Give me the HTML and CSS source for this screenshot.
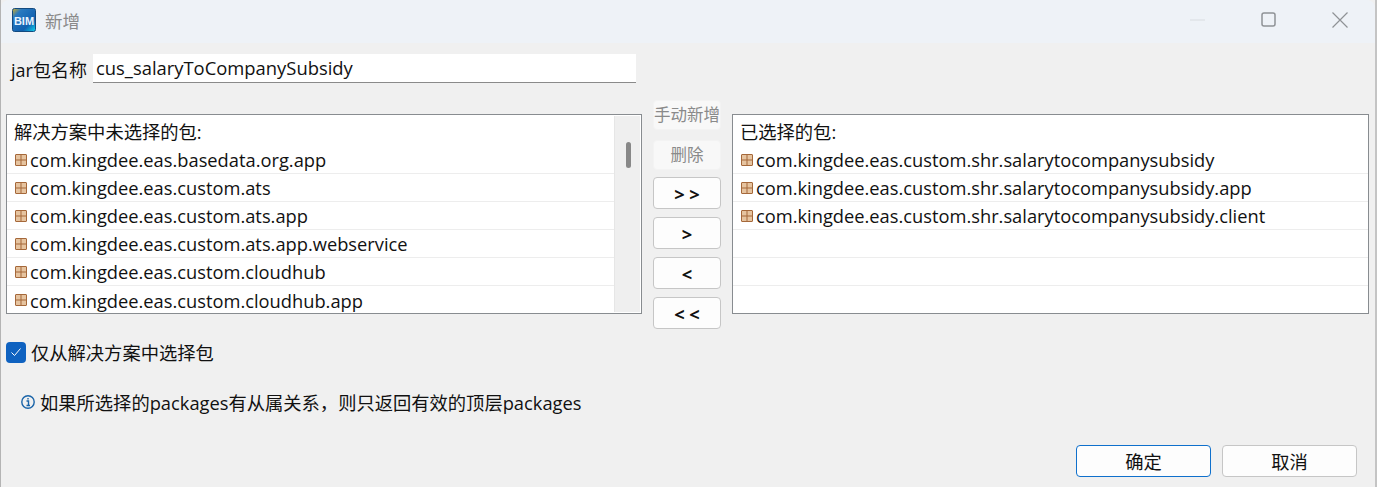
FILE: index.html
```html
<!DOCTYPE html>
<html lang="zh">
<head>
<meta charset="utf-8">
<title>新增</title>
<link rel="stylesheet" href="styles.css">
</head>
<body>
<div class="window">
  <header class="titlebar">
    <svg class="app-icon" width="24" height="24" viewBox="0 0 24 24">
      <defs><linearGradient id="g" x1="0" y1="0" x2="1" y2="1"><stop offset="0" stop-color="#d8b020"/><stop offset=".22" stop-color="#2a7ac0"/><stop offset=".7" stop-color="#1060b0"/><stop offset="1" stop-color="#10d8f0"/></linearGradient></defs>
      <rect x=".5" y=".5" width="23" height="23" rx="2" fill="url(#g)" stroke="#124a80"/>
      <text x="12" y="17" class="bim">BIM</text>
    </svg>
    <span class="title">新增</span>
    <div class="controls">
      <svg class="ctl" width="16" height="2" viewBox="0 0 16 2"><path d="M0 1h15" stroke="#d8dce0" stroke-width="1"/></svg>
      <svg class="ctl" width="16" height="16" viewBox="0 0 16 16"><rect x="1" y="1" width="13" height="13" rx="2" fill="none" stroke="#8f9296" stroke-width="1.500"/></svg>
      <svg class="ctl" width="16" height="16" viewBox="0 0 16 16"><path d="M.5.500l15 15M15.500.500l-15 15" stroke="#8f9296" stroke-width="1.200"/></svg>
    </div>
  </header>
  <main class="body">
    <div class="name-row">
      <label class="name-label">jar包名称</label>
      <div class="name-input">cus_salaryToCompanySubsidy</div>
    </div>
    <div class="transfer">
      <section class="list list-left">
        <div class="items">
          <div class="list-head">解决方案中未选择的包:</div>
          <div class="item"><svg class="pkg" viewBox="0 0 12 12"><use href="#pkg"/></svg>com.kingdee.eas.basedata.org.app</div>
          <div class="item"><svg class="pkg" viewBox="0 0 12 12"><use href="#pkg"/></svg>com.kingdee.eas.custom.ats</div>
          <div class="item"><svg class="pkg" viewBox="0 0 12 12"><use href="#pkg"/></svg>com.kingdee.eas.custom.ats.app</div>
          <div class="item"><svg class="pkg" viewBox="0 0 12 12"><use href="#pkg"/></svg>com.kingdee.eas.custom.ats.app.webservice</div>
          <div class="item"><svg class="pkg" viewBox="0 0 12 12"><use href="#pkg"/></svg>com.kingdee.eas.custom.cloudhub</div>
          <div class="item last"><svg class="pkg" viewBox="0 0 12 12"><use href="#pkg"/></svg>com.kingdee.eas.custom.cloudhub.app</div>
        </div>
        <div class="scrollbar"><div class="thumb"></div></div>
      </section>
      <div class="mid">
        <button class="btn btn-mid off">手动新增</button>
        <button class="btn btn-mid off">删除</button>
        <button class="btn btn-mid arrow">&gt; &gt;</button>
        <button class="btn btn-mid arrow">&gt;</button>
        <button class="btn btn-mid arrow">&lt;</button>
        <button class="btn btn-mid arrow">&lt; &lt;</button>
      </div>
      <section class="list list-right">
        <div class="items">
          <div class="list-head">已选择的包:</div>
          <div class="item"><svg class="pkg" viewBox="0 0 12 12"><use href="#pkg"/></svg>com.kingdee.eas.custom.shr.salarytocompanysubsidy</div>
          <div class="item"><svg class="pkg" viewBox="0 0 12 12"><use href="#pkg"/></svg>com.kingdee.eas.custom.shr.salarytocompanysubsidy.app</div>
          <div class="item"><svg class="pkg" viewBox="0 0 12 12"><use href="#pkg"/></svg>com.kingdee.eas.custom.shr.salarytocompanysubsidy.client</div>
          <div class="item"></div>
          <div class="item"></div>
          <div class="item last"></div>
        </div>
      </section>
    </div>
    <div class="check-row">
      <span class="checkbox"><svg width="12" height="10" viewBox="0 0 12 10"><path d="M1.500 5.500l3 3 6-7" fill="none" stroke="#fff" stroke-width="1"/></svg></span>
      <span>仅从解决方案中选择包</span>
    </div>
    <div class="info-row">
      <svg class="info" width="14" height="14" viewBox="0 0 14 14"><circle cx="7" cy="7" r="6.200" fill="none" stroke="#1a64a8" stroke-width="1.400"/><path d="M5.500 6h2v4M5.500 10.500h3.500M7 3v1.500" fill="none" stroke="#1a64a8" stroke-width="1.400"/></svg>
      <span>如果所选择的packages有从属关系，则只返回有效的顶层packages</span>
    </div>
    <footer class="footer">
      <button class="btn btn-foot primary">确定</button>
      <button class="btn btn-foot">取消</button>
    </footer>
  </main>
  <svg class="defs" width="0" height="0">
    <symbol id="pkg" viewBox="0 0 12 12">
      <rect x=".5" y=".5" width="11" height="11" rx=".5" fill="#e6c4a0" stroke="#a5683a"/>
      <path d="M6 0v12M0 6h12" stroke="#a5683a"/>
    </symbol>
  </svg>
</div>
</body>
</html>
```

FILE: styles.css
```css
* { box-sizing: border-box; }
html, body { margin: 0; padding: 0; height: 100%; overflow: hidden; }
body {
  font-family: "Open Sans", "Noto Sans CJK SC", sans-serif;
  font-size: 18.300px;
  color: #111;
  background: #f0f0f0;
}
.window {
  width: 1377px;
  height: 487px;
  border-left: 1px solid #b4b4b4;
  border-right: 2px solid #c4c4c4;
  background: #f0f0f0;
}
.titlebar {
  height: 43px;
  background: #eef2f7;
  display: flex;
  align-items: center;
  padding: 0 0 3px 11px;
  border-top-left-radius: 8px;
  border-top-right-radius: 8px;
}
.app-icon { flex: none; }
.bim { font-family: "Liberation Sans", sans-serif; font-size: 11px; font-weight: 700; fill: #e8f4ff; text-anchor: middle; }
.title { margin-left: 9px; color: #8a8a8a; font-size: 17.500px; }
.controls { margin-left: auto; display: flex; align-items: center; gap: 55px; padding-right: 27px; }
.body { padding: 11px 0 0 5px; }
.name-row { display: flex; align-items: center; height: 29px; }
.name-label { width: 87px; padding-left: 5px; white-space: nowrap; font-size: 18px; }
.name-input {
  width: 543px;
  height: 29px;
  line-height: 28px;
  background: #fff;
  border-bottom: 1px solid #8a8a8a;
  padding-left: 3px;
  font-size: 18.400px;
}
.transfer { display: flex; align-items: flex-start; margin-top: 17px; }
.list {
  margin-top: 14px;
  height: 200px;
  background: #fff;
  border: 1px solid #888c90;
  display: flex;
  overflow: hidden;
}
.list-left { width: 636px; }
.list-right { width: 637px; }
.items { flex: 1; min-width: 0; }
.list-head { height: 31px; line-height: 33px; padding-left: 7px; white-space: nowrap; }
.item {
  height: 28px;
  line-height: 27px;
  border-bottom: 1px solid #ededed;
  padding-left: 8px;
  display: flex;
  align-items: center;
  white-space: nowrap;
}
.item.last { border-bottom: none; }
.pkg { width: 12px; height: 12px; margin-right: 3px; flex: none; }
.scrollbar {
  width: 26px;
  margin: 1px 1px 1px 0;
  border-left: 1px solid #e6e6e6;
  background: #efefef;
  position: relative;
  display: flex;
  justify-content: center;
  padding: 26px 0 0 1px;
}
.thumb { width: 5px; height: 26px; border-radius: 3px; background: #888; }
.mid { width: 90px; display: flex; flex-direction: column; align-items: center; }
.btn {
  font: inherit;
  color: #111;
  background: #fdfdfd;
  border: 1px solid #c6c6c6;
  border-radius: 4px;
  padding: 0;
}
.btn-mid { width: 68px; height: 32px; margin-bottom: 8px; white-space: nowrap; overflow: hidden; }
.btn-mid.off { height: 30px; margin-bottom: 10px; padding-bottom: 2px; background: #f8f8f8; border-color: #f3f3f3; color: #8a8a8a; font-size: 16.500px; }
.btn-mid.off + .btn-mid.off { margin-bottom: 7px; }
.arrow { font-weight: 700; }
.check-row { display: flex; align-items: center; height: 22px; margin-top: 4px; gap: 5px; }
.checkbox {
  width: 20px; height: 21px;
  background: #0f62c0;
  border-radius: 4px;
  display: flex; align-items: center; justify-content: center;
}
.info-row { display: flex; align-items: center; height: 24px; margin-top: 27px; padding-left: 15px; gap: 5px; }
.info { flex: none; }
.footer { display: flex; justify-content: flex-end; gap: 11px; margin-top: 31px; padding-right: 18px; }
.btn-foot { width: 135px; height: 32px; }
.primary { border-color: #0f70cc; }
.defs { position: absolute; }
```
